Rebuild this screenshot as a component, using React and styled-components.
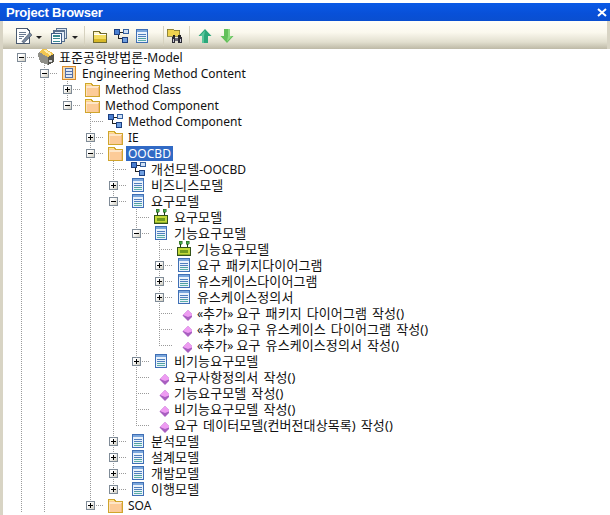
import React from 'react';
import styled, { createGlobalStyle, css } from 'styled-components';

const GlobalStyle = createGlobalStyle`
  html, body {
    margin: 0;
    padding: 0;
    background: #fff;
    overflow: hidden;
  }
`;

const Window = styled.div`
  width: 610px;
  height: 515px;
  padding-top: 3px;
  box-sizing: border-box;
  display: flex;
  flex-direction: column;
  overflow: hidden;
  background: #fff;
`;

const TitleBar = styled.div`
  height: 18px;
  flex: none;
  display: flex;
  align-items: center;
  justify-content: space-between;
  padding: 0 3px 0 6px;
  background: linear-gradient(#0a5ae6, #0850d8 60%, #0a4fd0);
  color: #fff;
  font: bold 13px "Liberation Sans", Arial, sans-serif;
  letter-spacing: -0.2px;
`;

const Toolbar = styled.div`
  height: 28px;
  flex: none;
  display: flex;
  align-items: center;
  padding: 2px 0 0 11px;
  box-sizing: border-box;
  border-left: 3px solid #d8d4c4;
  border-right: 3px solid #d8d4c4;
  background: linear-gradient(#fffef8, #fbf9ee 40%, #e2dfcf 75%, #bdb9a6);
`;

const ToolGroup = styled.div`
  display: flex;
  align-items: center;
  gap: ${(p) => p.$gap || 0}px;
  margin-right: ${(p) => p.$after || 0}px;
`;

const Caret = styled.span`
  width: 0;
  height: 0;
  margin: 2px 0 0 4px;
  border-left: 3px solid transparent;
  border-right: 3px solid transparent;
  border-top: 3px solid #222;
`;

const Separator = styled.span`
  width: 1px;
  height: 20px;
  margin-right: ${(p) => p.$after}px;
  background: #d6d2bf;
`;

const TreePanel = styled.div`
  flex: 1;
  min-height: 0;
  padding-left: 8px;
  border-left: 3px solid #d8d4c4;
  background: #fff;
  overflow: hidden;
  font: 12px "Noto Sans", "Noto Sans CJK KR", sans-serif;
  color: #111;
`;

const Row = styled.div`
  display: flex;
  align-items: center;
  height: 16px;
`;

const dots = (dir) => `repeating-linear-gradient(${dir}, #9a9a9a 0 1px, transparent 1px 2px)`;

const guideKinds = {
  none: css``,
  pass: css`
    background-image: ${dots('180deg')};
    background-size: 1px 16px;
    background-position: 10px 0;
  `,
  tee: css`
    background-image: ${dots('180deg')}, ${dots('90deg')};
    background-size: 1px 16px, 13px 1px;
    background-position: 10px 0, 10px 8px;
  `,
  elbow: css`
    background-image: ${dots('180deg')}, ${dots('90deg')};
    background-size: 1px 9px, 13px 1px;
    background-position: 10px 0, 10px 8px;
  `,
  first: css`
    background-image: ${dots('180deg')}, ${dots('90deg')};
    background-size: 1px 8px, 13px 1px;
    background-position: 10px 8px, 10px 8px;
  `,
};

const Guide = styled.span`
  flex: none;
  width: 23px;
  height: 16px;
  display: flex;
  align-items: center;
  padding-left: 6px;
  box-sizing: border-box;
  background-repeat: no-repeat;
  ${(p) => guideKinds[p.$kind]}
`;

const Expander = styled.span`
  width: 9px;
  height: 9px;
  box-sizing: border-box;
  display: flex;
  border: 1px solid #7f8b97;
  background: linear-gradient(135deg, #fff 30%, #d0cdc0);
`;

const NodeIcon = styled.span`
  flex: none;
  width: 16px;
  height: 16px;
  margin-left: 4px;
  display: flex;
`;

const Label = styled.span`
  margin-left: 3px;
  padding: 0 2px;
  height: 15px;
  line-height: 15px;
  white-space: nowrap;
  background: ${(p) => (p.$selected ? '#316ac5' : 'transparent')};
  color: ${(p) => (p.$selected ? '#fff' : '#111')};
`;

const Hangul = styled.span`
  font-size: 13px;
  letter-spacing: 0.1px;
  word-spacing: 1.5px;
`;

const Svg = ({ children, size = 16 }) => (
  <svg width={size} height={size} viewBox="0 0 16 16" shapeRendering="crispEdges">
    {children}
  </svg>
);

const Folder = () => (
  <Svg>
    <path d="M1.500 2.500h6l1 2h7v11h-14z" fill="#fccb98" stroke="#d0a52c" />
    <path d="M2 3h5v1H2z" fill="#ffe98a" />
    <path d="M2 5h13v2H2z" fill="#fee6c8" />
    <path d="M2 7h1v8H2z" fill="#fde0bc" />
    <path d="M14 6h1v9h-1z" fill="#f2b878" />
  </Svg>
);

const ListIcon = () => (
  <Svg>
    <path d="M2.500 1.500h11v13h-11z" fill="#eaf2fb" stroke="#3f6fb5" />
    <path d="M3 2h10v2H3z" fill="#7aa6dc" />
    <path d="M4 6h8v1H4zM4 8h8v1H4z" fill="#4f7fbd" />
    <path d="M4 10h8v1H4z" fill="#4fa0a0" />
    <path d="M4 12h8v1H4z" fill="#5bb0a8" />
  </Svg>
);

const DiagramIcon = () => (
  <Svg>
    <path d="M5 5v5h5M7 4h3" fill="none" stroke="#222" />
    <path d="M1.500 1.500h5v5h-5z" fill="#4a7fd0" stroke="#1c3f80" />
    <path d="M10.500 1.500h5v4h-5z" fill="#cfe0f5" stroke="#33609f" />
    <path d="M9.500 9.500h5v5h-5z" fill="#6f9fe0" stroke="#1c3f80" />
  </Svg>
);

const RobotIcon = () => (
  <Svg>
    <path d="M3 0h3v3H3zM10 0h3v3h-3z" fill="#3fa34a" stroke="#2c5d16" strokeWidth="0.5" />
    <path d="M4 3h1v4H4zM11 3h1v4h-1z" fill="#1b3d12" />
    <path d="M1.500 6.500h13v8h-13z" fill="#c3d93a" stroke="#33521a" />
    <path d="M4 9h8v3H4z" fill="#6f9a1e" />
    <path d="M2 13h12v1H2z" fill="#8fb02a" />
  </Svg>
);

const DiamondIcon = () => (
  <Svg>
    <path d="M12 5l5.500 5.500L12 16l-5.500-5.500z" fill="#a85fc0" shapeRendering="auto" />
    <path d="M12 5l5 5-5 2-5-2z" fill="#ee9cf2" shapeRendering="auto" />
  </Svg>
);

const PackageIcon = () => (
  <Svg>
    <path d="M1.500 1.500h13v13h-13z" fill="#f9d9a8" stroke="#d98b2b" />
    <path d="M4.500 3.500h7v9h-7z" fill="#dfe8f5" stroke="#5470a8" />
    <path d="M5 6h6v1H5zM5 9h6v1H5z" fill="#5470a8" />
  </Svg>
);

const ModelIcon = () => (
  <Svg>
    <path d="M0 6l1-3 9 5v8l-8-3z" fill="#8f8f88" />
    <path d="M1 3l4-3 3 0 8 5-6 3z" fill="#f2c650" />
    <path d="M5 1h3l6 4-2 1z" fill="#ffeeb0" />
    <path d="M10 8l6-3v8l-6 3z" fill="#55554f" />
    <path d="M11 11h3v2h-3z" fill="#dcdcdc" />
  </Svg>
);

const ToolDoc = () => (
  <Svg size={18}>
    <path d="M2.500 1.500h9l2 2v11h-11z" fill="#fff" stroke="#4a5a70" />
    <path d="M4 4h7v1H4zM4 6h7v1H4zM4 8h5v1H4zM4 10h3v1H4z" fill="#6a7a90" />
    <path d="M7 13l7-8 2 2-7 7z" fill="#7a8aa0" stroke="#2c3a50" strokeWidth="0.5" shapeRendering="auto" />
  </Svg>
);

const ToolPages = () => (
  <Svg size={18}>
    <path d="M5.500 1.500h9v9h-9z" fill="#dbe6f2" stroke="#58708e" />
    <path d="M3.500 3.500h9v9h-9z" fill="#e6eef7" stroke="#58708e" />
    <path d="M1.500 5.500h9v9h-9z" fill="#fff" stroke="#3f5d86" />
    <path d="M3 7.500h6v1H3zM3 10h6v1H3zM3 12.500h6v1H3z" fill="#3a8a90" />
  </Svg>
);

const ToolFolder = () => (
  <Svg>
    <path d="M1.500 3.500h6l1 2h6v9h-13z" fill="#f3dc60" stroke="#6f6a30" />
    <path d="M2 3.900h5v2H2z" fill="#fff6c4" />
    <path d="M2 6h12v1H2z" fill="#fff" />
    <path d="M2 11h12v3H2z" fill="#d7b828" />
  </Svg>
);

const ToolBinoculars = () => (
  <Svg size={18}>
    <path d="M1 2h5l1 1h5v5H1z" fill="#eed24e" stroke="#7a7230" strokeWidth="0.7" />
    <path d="M6 7h2v3H6zM11 7h2v3h-2z" fill="#222" />
    <path d="M5 9h3v5H5zM11 9h3v5h-3z" fill="#2a2a35" />
    <path d="M6 11h1v2H6zM12 11h1v2h-1z" fill="#c9c9d6" />
    <path d="M8 10h3v2H8z" fill="#6a6a78" />
  </Svg>
);

const ToolArrow = ({ down }) => (
  <Svg>
    <g transform={down ? 'rotate(180 8 8)' : undefined}>
      <path
        d="M8 1l6.500 7h-3.500v7H5V8H1.500z"
        fill={down ? '#63c05a' : '#2aa77a'}
        shapeRendering="auto"
      />
      <path d="M8 2.500L7 8v7H5V8H3z" fill={down ? '#8edb82' : '#59c79c'} shapeRendering="auto" />
    </g>
  </Svg>
);

const icons = {
  model: ModelIcon,
  package: PackageIcon,
  folder: Folder,
  diagram: DiagramIcon,
  list: ListIcon,
  robot: RobotIcon,
  op: DiamondIcon,
};

const tree = [
  {
    label: '표준공학방법론-Model', icon: 'model', open: true, more: true,
    children: [
      {
        label: 'Engineering Method Content', icon: 'package', open: true, more: true,
        children: [
          { label: 'Method Class', icon: 'folder', closed: true },
          {
            label: 'Method Component', icon: 'folder', open: true,
            children: [
              { label: 'Method Component', icon: 'diagram' },
              { label: 'IE', icon: 'folder', closed: true },
              {
                label: 'OOCBD', icon: 'folder', open: true, selected: true,
                children: [
                  { label: '개선모델-OOCBD', icon: 'diagram' },
                  { label: '비즈니스모델', icon: 'list', closed: true },
                  {
                    label: '요구모델', icon: 'list', open: true,
                    children: [
                      { label: '요구모델', icon: 'robot' },
                      {
                        label: '기능요구모델', icon: 'list', open: true,
                        children: [
                          { label: '기능요구모델', icon: 'robot' },
                          { label: '요구 패키지다이어그램', icon: 'list', closed: true },
                          { label: '유스케이스다이어그램', icon: 'list', closed: true },
                          { label: '유스케이스정의서', icon: 'list', closed: true },
                          { label: '«추가» 요구 패키지 다이어그램 작성()', icon: 'op' },
                          { label: '«추가» 요구 유스케이스 다이어그램 작성()', icon: 'op' },
                          { label: '«추가» 요구 유스케이스정의서 작성()', icon: 'op' },
                        ],
                      },
                      { label: '비기능요구모델', icon: 'list', closed: true },
                      { label: '요구사항정의서 작성()', icon: 'op' },
                      { label: '기능요구모델 작성()', icon: 'op' },
                      { label: '비기능요구모델 작성()', icon: 'op' },
                      { label: '요구 데이터모델(컨버전대상목록) 작성()', icon: 'op' },
                    ],
                  },
                  { label: '분석모델', icon: 'list', closed: true },
                  { label: '설계모델', icon: 'list', closed: true },
                  { label: '개발모델', icon: 'list', closed: true },
                  { label: '이행모델', icon: 'list', closed: true },
                ],
              },
              { label: 'SOA', icon: 'folder', closed: true },
            ],
          },
        ],
      },
    ],
  },
];

// flatten the nested nodes into rows, each with the guide cells it needs
const flatten = (nodes, guides = [], isRoot = true) => nodes.flatMap((node, i) => {
  const hasNext = i < nodes.length - 1 || node.more;
  let kind = hasNext ? 'tee' : 'elbow';
  if (isRoot && i === 0) kind = 'first';
  const row = { ...node, guides, kind };
  const below = [...guides, hasNext ? 'pass' : 'none'];
  return [row, ...flatten(node.children || [], below, false)];
});

const Sign = ({ open }) => (
  <svg width="7" height="7" viewBox="0 0 7 7" shapeRendering="crispEdges">
    <path d={open ? 'M1 3h5v1H1z' : 'M1 3h5v1H1zM3 1h1v5H3z'} fill="#000" />
  </svg>
);

// hangul runs (with their spaces and brackets) are set a size up to get the wide gulim look
const splitLabel = (text) => text.split(/([가-힣][가-힣 ()]*)/).map((part, i) => (
  /[가-힣]/.test(part) ? <Hangul key={i}>{part}</Hangul> : part
));

const TreeRow = ({ node }) => {
  const Icon = icons[node.icon];
  return (
    <Row>
      {node.guides.map((g, i) => <Guide key={i} $kind={g} />)}
      <Guide $kind={node.kind}>
        {(node.open || node.closed) && (
          <Expander><Sign open={node.open} /></Expander>
        )}
      </Guide>
      <NodeIcon><Icon /></NodeIcon>
      <Label $selected={node.selected}>{splitLabel(node.label)}</Label>
    </Row>
  );
};

const App = () => (
  <Window>
    <GlobalStyle />
    <TitleBar>
      <span>Project Browser</span>
      <svg width="10" height="9" viewBox="0 0 10 9">
        <path d="M1 1l8 7M9 1l-8 7" stroke="#fff" strokeWidth="2" />
      </svg>
    </TitleBar>
    <Toolbar>
      <ToolGroup $after={8}><ToolDoc /><Caret /></ToolGroup>
      <ToolGroup $after={6}><ToolPages /><Caret /></ToolGroup>
      <Separator $after={7} />
      <ToolGroup $after={13} $gap={5}><ToolFolder /><DiagramIcon /><ListIcon /></ToolGroup>
      <Separator $after={2} />
      <ToolGroup $after={5}><ToolBinoculars /></ToolGroup>
      <Separator $after={7} />
      <ToolGroup $gap={6}><ToolArrow /><ToolArrow down /></ToolGroup>
    </Toolbar>
    <TreePanel>
      {flatten(tree).map((node, i) => <TreeRow key={i} node={node} />)}
    </TreePanel>
  </Window>
);

export default App;
